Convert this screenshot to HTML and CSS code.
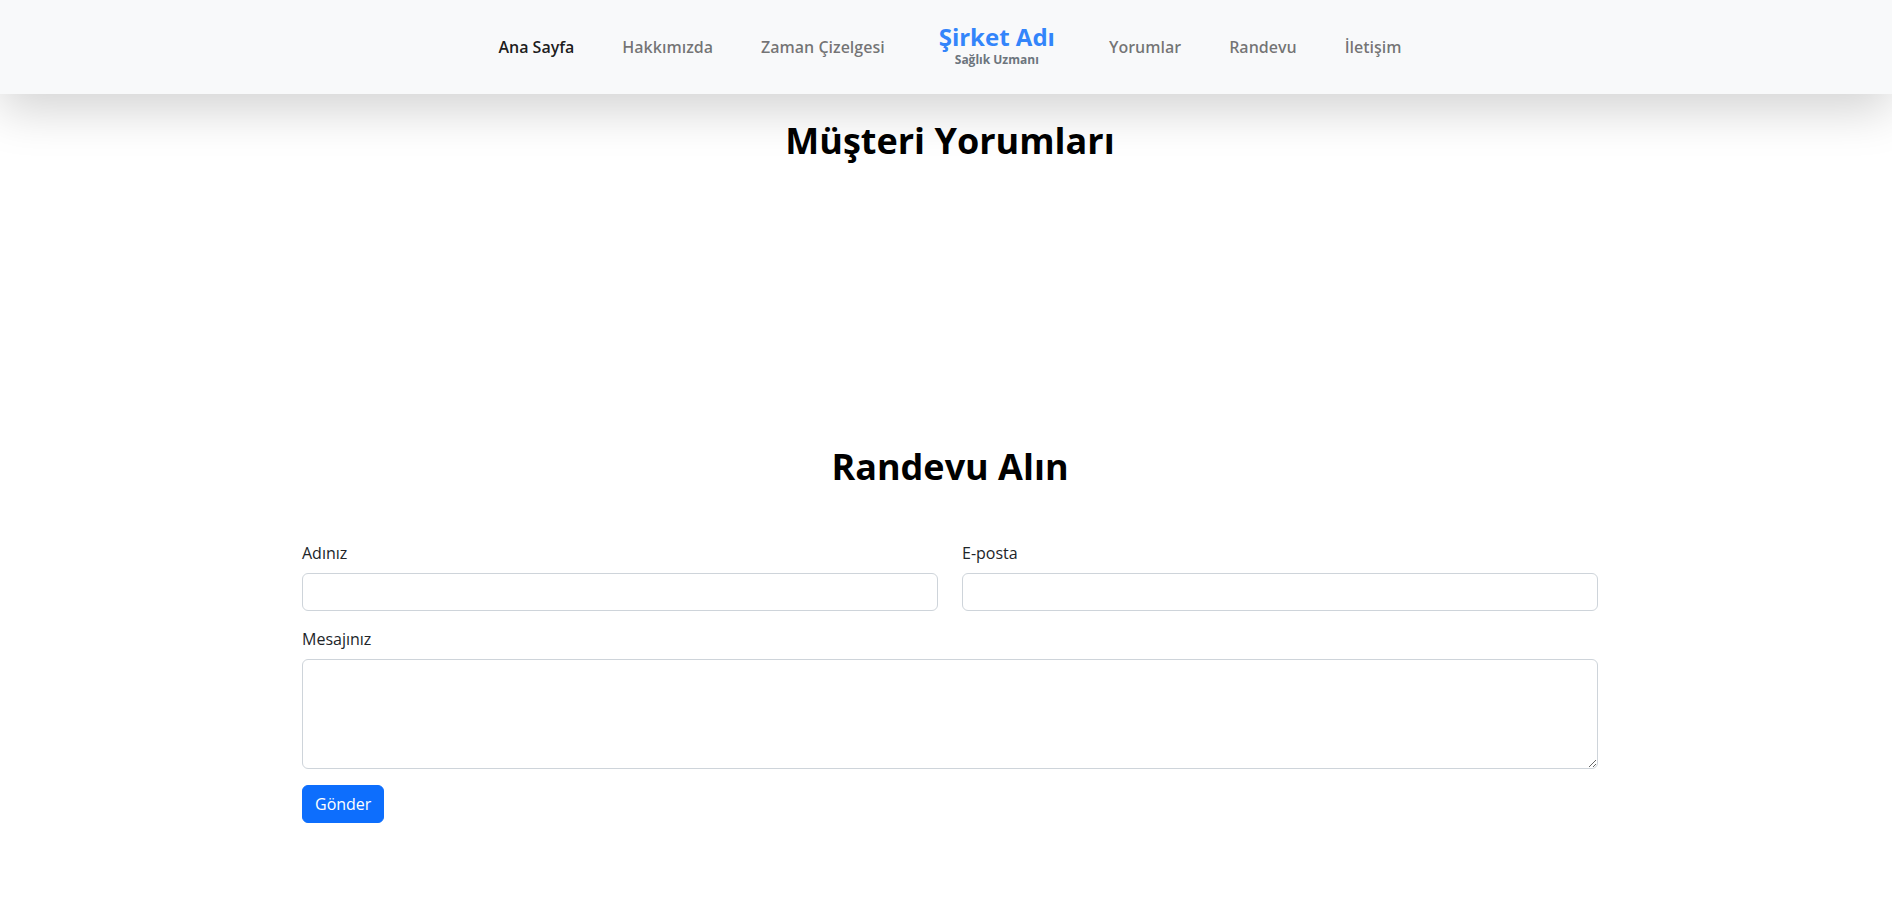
FILE: index.html
```html
<!DOCTYPE html>
<html lang="tr">
<head>
<meta charset="utf-8">
<title>Şirket Adı</title>
<link rel="stylesheet" href="styles.css">
</head>
<body>
<nav class="navbar">
  <ul class="nav-list">
    <li><a class="nav-link active" href="#">Ana Sayfa</a></li>
    <li><a class="nav-link" href="#">Hakkımızda</a></li>
    <li><a class="nav-link" href="#">Zaman Çizelgesi</a></li>
    <li class="brand">
      <a class="brand-name" href="#">Şirket Adı</a>
      <span class="brand-sub">Sağlık Uzmanı</span>
    </li>
    <li><a class="nav-link" href="#">Yorumlar</a></li>
    <li><a class="nav-link" href="#">Randevu</a></li>
    <li><a class="nav-link" href="#">İletişim</a></li>
  </ul>
</nav>

<main class="page">
  <section class="reviews">
    <h2 class="section-title">Müşteri Yorumları</h2>
    <div class="reviews-track"></div>
  </section>

  <section class="appointment">
    <h2 class="section-title appt-title">Randevu Alın</h2>
    <form class="appt-form">
      <div class="form-row">
        <div class="field">
          <label class="form-label" for="name">Adınız</label>
          <input class="form-control" id="name" type="text">
        </div>
        <div class="field">
          <label class="form-label" for="email">E-posta</label>
          <input class="form-control" id="email" type="email">
        </div>
      </div>
      <div class="field">
        <label class="form-label" for="msg">Mesajınız</label>
        <textarea class="form-control textarea" id="msg" rows="4"></textarea>
      </div>
      <div class="actions">
        <button class="btn-primary" type="button">Gönder</button>
      </div>
    </form>
  </section>
</main>
</body>
</html>
```

FILE: styles.css
```css
* { box-sizing: border-box; }

html, body {
  margin: 0;
  padding: 0;
}

body {
  font-family: "Open Sans", "Liberation Sans", sans-serif;
  font-size: 16px;
  line-height: 1.5;
  color: #212529;
  background: #fff;
  padding-left: 8px;
}

.navbar {
  position: relative;
  z-index: 10;
  height: 94px;
  margin-left: -8px;
  padding-left: 8px;
  background: #f8f9fa;
  box-shadow: 0 16px 48px rgba(0, 0, 0, 0.175);
  display: flex;
  align-items: center;
  justify-content: center;
}

.nav-list {
  list-style: none;
  margin: 0;
  padding: 0;
  display: flex;
  align-items: center;
  gap: 48px;
}

.nav-link {
  display: block;
  font-size: 16px;
  font-weight: 600;
  line-height: 24px;
  color: rgba(0, 0, 0, 0.55);
  text-decoration: none;
}

.nav-link.active {
  color: rgba(0, 0, 0, 0.9);
}

.brand {
  display: flex;
  flex-direction: column;
  align-items: center;
  margin: 0 6px;
  padding-bottom: 5px;
}

.brand-name {
  font-size: 24px;
  font-weight: 700;
  line-height: 29px;
  color: #3385fa;
  text-decoration: none;
}

.brand-sub {
  font-size: 12px;
  font-weight: 700;
  line-height: 14px;
  margin-top: 2px;
  color: #6c757d;
}

.page {
  width: 1296px;
  margin: 0 auto;
}

.section-title {
  margin: 0;
  text-align: center;
  font-size: 36px;
  font-weight: 700;
  line-height: 1.2;
  color: #000;
}

.reviews {
  padding-top: 25px;
}

.reviews-track {
  height: 283px;
}

.appt-title {
  margin-bottom: 53px;
}

.form-row {
  display: grid;
  grid-template-columns: 1fr 1fr;
  gap: 24px;
}

.field {
  margin-bottom: 16px;
}

.form-label {
  display: block;
  margin-bottom: 8px;
  font-size: 16px;
  line-height: 24px;
  color: #212529;
}

.form-control {
  display: block;
  width: 100%;
  height: 38px;
  padding: 6px 12px;
  font-family: inherit;
  font-size: 16px;
  line-height: 24px;
  color: #212529;
  background: #fff;
  border: 1px solid #ced4da;
  border-radius: 6px;
}

.textarea {
  height: 110px;
  resize: vertical;
}

.btn-primary {
  display: inline-block;
  height: 38px;
  padding: 6px 12px;
  font-family: inherit;
  font-size: 16px;
  line-height: 24px;
  color: #fff;
  background: #0d6efd;
  border: 1px solid #0d6efd;
  border-radius: 6px;
  cursor: pointer;
}
```
